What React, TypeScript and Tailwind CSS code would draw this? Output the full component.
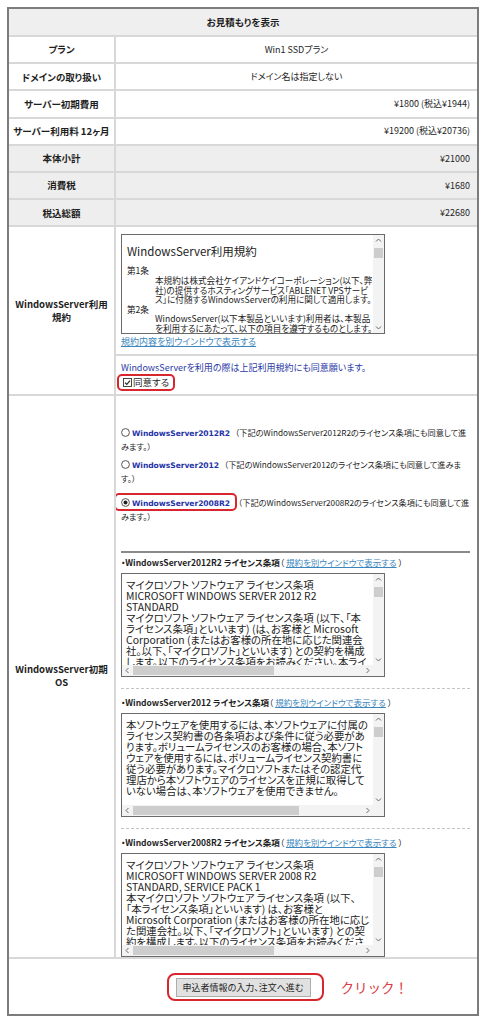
import React from "react";

const JP = "font-['Noto_Sans_CJK_JP','Noto_Sans',sans-serif] [font-feature-settings:'palt']";

function Chev({ dir }: { dir: "up" | "down" | "left" | "right" }) {
  const d = {
    up: "M1 4.5 L3.5 2 L6 4.5",
    down: "M1 2.5 L3.5 5 L6 2.5",
    left: "M4.5 1 L2 3.5 L4.5 6",
    right: "M2.5 1 L5 3.5 L2.5 6",
  }[dir];
  return (
    <svg width="7" height="7" viewBox="0 0 7 7">
      <path d={d} fill="none" stroke="#6a6a6a" strokeWidth="1" />
    </svg>
  );
}

function ScrollBox({
  boxCls,
  hThumbCls,
  children,
}: {
  boxCls: string;
  hThumbCls?: string;
  children: React.ReactNode;
}) {
  return (
    <div className={`flex flex-col border border-[#6a6a6a] bg-white w-[264px] ${boxCls}`}>
      <div className="flex flex-1 min-h-0">
        <div className="flex-1 min-w-0 overflow-hidden">{children}</div>
        <div className="w-[11px] flex flex-col items-center bg-[#f3f3f3]">
          <div className="h-[11px] flex items-center justify-center">
            <Chev dir="up" />
          </div>
          <div className="w-[9px] h-[10px] mt-[2px] bg-[#cdcdcd]" />
          <div className="flex-1" />
          <div className="h-[11px] flex items-center justify-center">
            <Chev dir="down" />
          </div>
        </div>
      </div>
      {hThumbCls && (
        <div className="h-[11px] flex bg-[#f3f3f3]">
          <div className="w-[11px] flex items-center justify-center">
            <Chev dir="left" />
          </div>
          <div className="flex-1 flex items-center">
            <div className={`h-[9px] bg-[#cdcdcd] ${hThumbCls}`} />
          </div>
          <div className="w-[11px] flex items-center justify-center">
            <Chev dir="right" />
          </div>
          <div className="w-[11px]" />
        </div>
      )}
    </div>
  );
}

function Row({
  label,
  value,
  gray,
  center,
}: {
  label: string;
  value: string;
  gray?: boolean;
  center?: boolean;
}) {
  const bg = gray ? "bg-[#eeeeee]" : "bg-white";
  return (
    <div className="grid grid-cols-[105px_minmax(0,1fr)] gap-[2px] h-[25.2px]">
      <div className={`${bg} flex items-center justify-center text-[9.5px] font-bold`}>{label}</div>
      <div
        className={`${bg} flex items-center text-[9px] ${center ? "justify-center" : "justify-end pr-[7px]"}`}
      >
        {value}
      </div>
    </div>
  );
}

function Radio({ checked }: { checked?: boolean }) {
  return (
    <svg width="9" height="9" viewBox="0 0 9 9" className="inline-block align-[-1px] mr-[2px]">
      <circle cx="4.5" cy="4.5" r="3.9" fill="white" stroke="#444" strokeWidth="0.9" />
      {checked && <circle cx="4.5" cy="4.5" r="2" fill="#222" />}
    </svg>
  );
}

function OsName({ children }: { children: React.ReactNode }) {
  return (
    <span className="font-['DejaVu_Sans',sans-serif] font-bold text-[7.6px] tracking-[-0.05px] text-[#2533a8]">
      {children}
    </span>
  );
}

function LicenseHeader({ name }: { name: string }) {
  return (
    <div className="text-[8.5px] leading-[14px] whitespace-nowrap">
      <span className="font-bold">・{name} ライセンス条項</span>
      <span>（ </span>
      <span className="text-[#3a86bd] underline">規約を別ウインドウで表示する</span>
      <span> ）</span>
    </div>
  );
}

function Lines({ lines, partial }: { lines: string[]; partial?: string }) {
  return (
    <div className="pt-[5px] pl-[4px] text-[10.4px] leading-[11px] text-[#222] whitespace-nowrap">
      {lines.map((l, i) => (
        <div key={i}>{l}</div>
      ))}
      {partial && <div>{partial}</div>}
    </div>
  );
}

export default function App() {
  return (
    <div className={`min-h-[1024px] bg-white pt-[7px] pl-[7px] text-[#1e1e1e] ${JP}`}>
      <div className="w-[472px] border-2 border-[#7c7c7c] bg-[#d8d8d8] flex flex-col gap-[2px]">
        <div className="h-[26px] bg-[#efefef] flex items-center justify-center text-[9.5px] font-bold">
          お見積もりを表示
        </div>
        <Row label="プラン" value="Win1 SSDプラン" center />
        <Row label="ドメインの取り扱い" value="ドメイン名は指定しない" center />
        <Row label="サーバー初期費用" value="¥1800 (税込¥1944)" />
        <Row label="サーバー利用料 12ヶ月" value="¥19200 (税込¥20736)" />
        <Row label="本体小計" value="¥21000" gray />
        <Row label="消費税" value="¥1680" gray />
        <Row label="税込総額" value="¥22680" gray />

        {/* WindowsServer利用規約 */}
        <div className="grid grid-cols-[105px_minmax(0,1fr)] gap-[2px]">
          <div className="bg-white flex items-center justify-center text-center text-[9.5px] font-bold leading-[13px] px-[6px]">
            WindowsServer利用
            <br />
            規約
          </div>
          <div className="flex flex-col gap-[2px] min-w-0">
            <div className="bg-white h-[126.6px] pt-[7px] pl-[5px]">
              <ScrollBox boxCls="h-[100px]">
                <div className="pl-[5px] pt-[9px] text-[#222] whitespace-nowrap">
                  <div className="text-[11.5px] leading-[14px]">WindowsServer利用規約</div>
                  <div className="mt-[8px] text-[8.6px] leading-[9.6px]">
                    <div>第1条</div>
                    <div className="pl-[28px]">本規約は株式会社ケイアンドケイコーポレーション(以下、弊</div>
                    <div className="pl-[28px]">社)の提供するホスティングサービス「ABLENET VPSサービ</div>
                    <div className="pl-[28px]">ス」に付随するWindowsServerの利用に関して適用します。</div>
                    <div>第2条</div>
                    <div className="pl-[28px]">WindowsServer(以下本製品といいます)利用者は、本製品</div>
                    <div className="pl-[28px]">を利用するにあたって、以下の項目を遵守するものとします。</div>
                  </div>
                </div>
              </ScrollBox>
              <div className="mt-[2px] text-[9px] leading-[12px] text-[#3a86bd] underline">
                規約内容を別ウインドウで表示する
              </div>
            </div>
            <div className="bg-white h-[38px] pt-[6px] pl-[5px] flex flex-col items-start">
              <div className="text-[9px] leading-[12px] text-[#2c3aa6]">
                WindowsServerを利用の際は上記利用規約にも同意願います。
              </div>
              <div className="relative mt-[2px] flex items-center h-[13px] text-[9.5px] leading-[13px] ml-[2px]">
                <svg width="9" height="9" viewBox="0 0 9 9" className="mr-[1px]">
                  <rect x="0.5" y="0.5" width="8" height="8" fill="white" stroke="#333" strokeWidth="0.9" />
                  <path d="M2 4.6 L3.8 6.4 L7 2.6" fill="none" stroke="#222" strokeWidth="1.1" />
                </svg>
                同意する
                <div className="absolute -left-[6px] -right-[6px] -top-[2px] -bottom-[2px] border-[2.5px] border-[#d8262e] rounded-[5px]" />
              </div>
            </div>
          </div>
        </div>

        {/* WindowsServer初期OS */}
        <div className="grid grid-cols-[105px_minmax(0,1fr)] gap-[2px]">
          <div className="bg-white flex items-center justify-center text-center text-[9.5px] font-bold leading-[13px]">
            WindowsServer初期
            <br />
            OS
          </div>
          <div className="bg-white min-w-0 overflow-hidden pl-[5px] pr-[7px] pt-[30px] h-[561px] flex flex-col">
            <div className="text-[8.2px] leading-[13.5px] whitespace-nowrap">
              <div>
                <Radio />
                <OsName>WindowsServer2012R2</OsName>
                <span className="ml-[5px]">（下記のWindowsServer2012R2のライセンス条項にも同意して進</span>
                <br />
                みます。）
              </div>
              <div className="mt-[4px]">
                <Radio />
                <OsName>WindowsServer2012</OsName>
                <span className="ml-[5px]">（下記のWindowsServer2012のライセンス条項にも同意して進みま</span>
                <br />
                す。）
              </div>
              <div className="mt-[10px]">
                <span className="relative">
                  <Radio checked />
                  <OsName>WindowsServer2008R2</OsName>
                  <span className="absolute -left-[7px] -right-[7px] -top-[3px] -bottom-[3px] border-[2.5px] border-[#d8262e] rounded-[5px]" />
                </span>
                <span className="ml-[8px]">（下記のWindowsServer2008R2のライセンス条項にも同意して進</span>
                <br />
                みます。）
              </div>
            </div>

            <div className="mt-[27px] h-[2px] bg-[#8a8a8a]" />

            <div className="mt-[2px]">
              <LicenseHeader name="WindowsServer2012R2" />
            </div>
            <div className="mt-[4px]">
              <ScrollBox boxCls="h-[104px]" hThumbCls="w-[141px]">
                <Lines
                  lines={[
                    "マイクロソフト ソフトウェア ライセンス条項",
                    "MICROSOFT WINDOWS SERVER 2012 R2",
                    "STANDARD",
                    "マイクロソフト ソフトウェア ライセンス条項 (以下、「本",
                    "ライセンス条項」といいます) (は、お客様と Microsoft",
                    "Corporation (またはお客様の所在地に応じた関連会",
                    "社。以下、「マイクロソフト」といいます) との契約を構成",
                  ]}
                  partial="します。以下のライセンス条項をお読みください。本ライ"
                />
              </ScrollBox>
            </div>
            <div className="mt-[11px] border-t border-dashed border-[#c4c4c4]" />

            <div className="mt-[6px]">
              <LicenseHeader name="WindowsServer2012" />
            </div>
            <div className="mt-[4px]">
              <ScrollBox boxCls="h-[104px]" hThumbCls="w-[166px]">
                <Lines
                  lines={[
                    "本ソフトウェアを使用するには、本ソフトウェアに付属の",
                    "ライセンス契約書の各条項および条件に従う必要があ",
                    "ります。ボリュームライセンスのお客様の場合、本ソフト",
                    "ウェアを使用するには、ボリュームライセンス契約書に",
                    "従う必要があります。マイクロソフトまたはその認定代",
                    "理店から本ソフトウェアのライセンスを正規に取得して",
                    "いない場合は、本ソフトウェアを使用できません。",
                  ]}
                />
              </ScrollBox>
            </div>
            <div className="mt-[11px] border-t border-dashed border-[#c4c4c4]" />

            <div className="mt-[6px]">
              <LicenseHeader name="WindowsServer2008R2" />
            </div>
            <div className="mt-[4px]">
              <ScrollBox boxCls="h-[104px]" hThumbCls="w-[141px]">
                <Lines
                  lines={[
                    "マイクロソフト ソフトウェア ライセンス条項",
                    "MICROSOFT WINDOWS SERVER 2008 R2",
                    "STANDARD, SERVICE PACK 1",
                    "本マイクロソフト ソフトウェア ライセンス条項 (以下、",
                    "「本ライセンス条項」といいます) は、お客様と",
                    "Microsoft Corporation (またはお客様の所在地に応じ",
                    "た関連会社。以下、「マイクロソフト」といいます) との契",
                  ]}
                  partial="約を構成します。以下のライセンス条項をお読みくださ"
                />
              </ScrollBox>
            </div>
          </div>
        </div>

        {/* button row */}
        <div className="bg-white h-[55px] pt-[2px] flex items-center justify-center">
          <div className="relative">
            <div className="w-[135px] h-[19px] bg-[#e1e1e1] border border-[#adadad] flex items-center justify-center text-[9px]">
              申込者情報の入力、注文へ進む
            </div>
            <div className="absolute -left-[9px] -right-[13px] -top-[5px] -bottom-[4px] border-[2.5px] border-[#d8262e] rounded-[8px]" />
            <div className="absolute left-[165px] top-[-3px] whitespace-nowrap text-[13.5px] leading-[24px] text-[#dc3a44] [font-feature-settings:normal]">
              クリック！
            </div>
          </div>
        </div>
      </div>
    </div>
  );
}
